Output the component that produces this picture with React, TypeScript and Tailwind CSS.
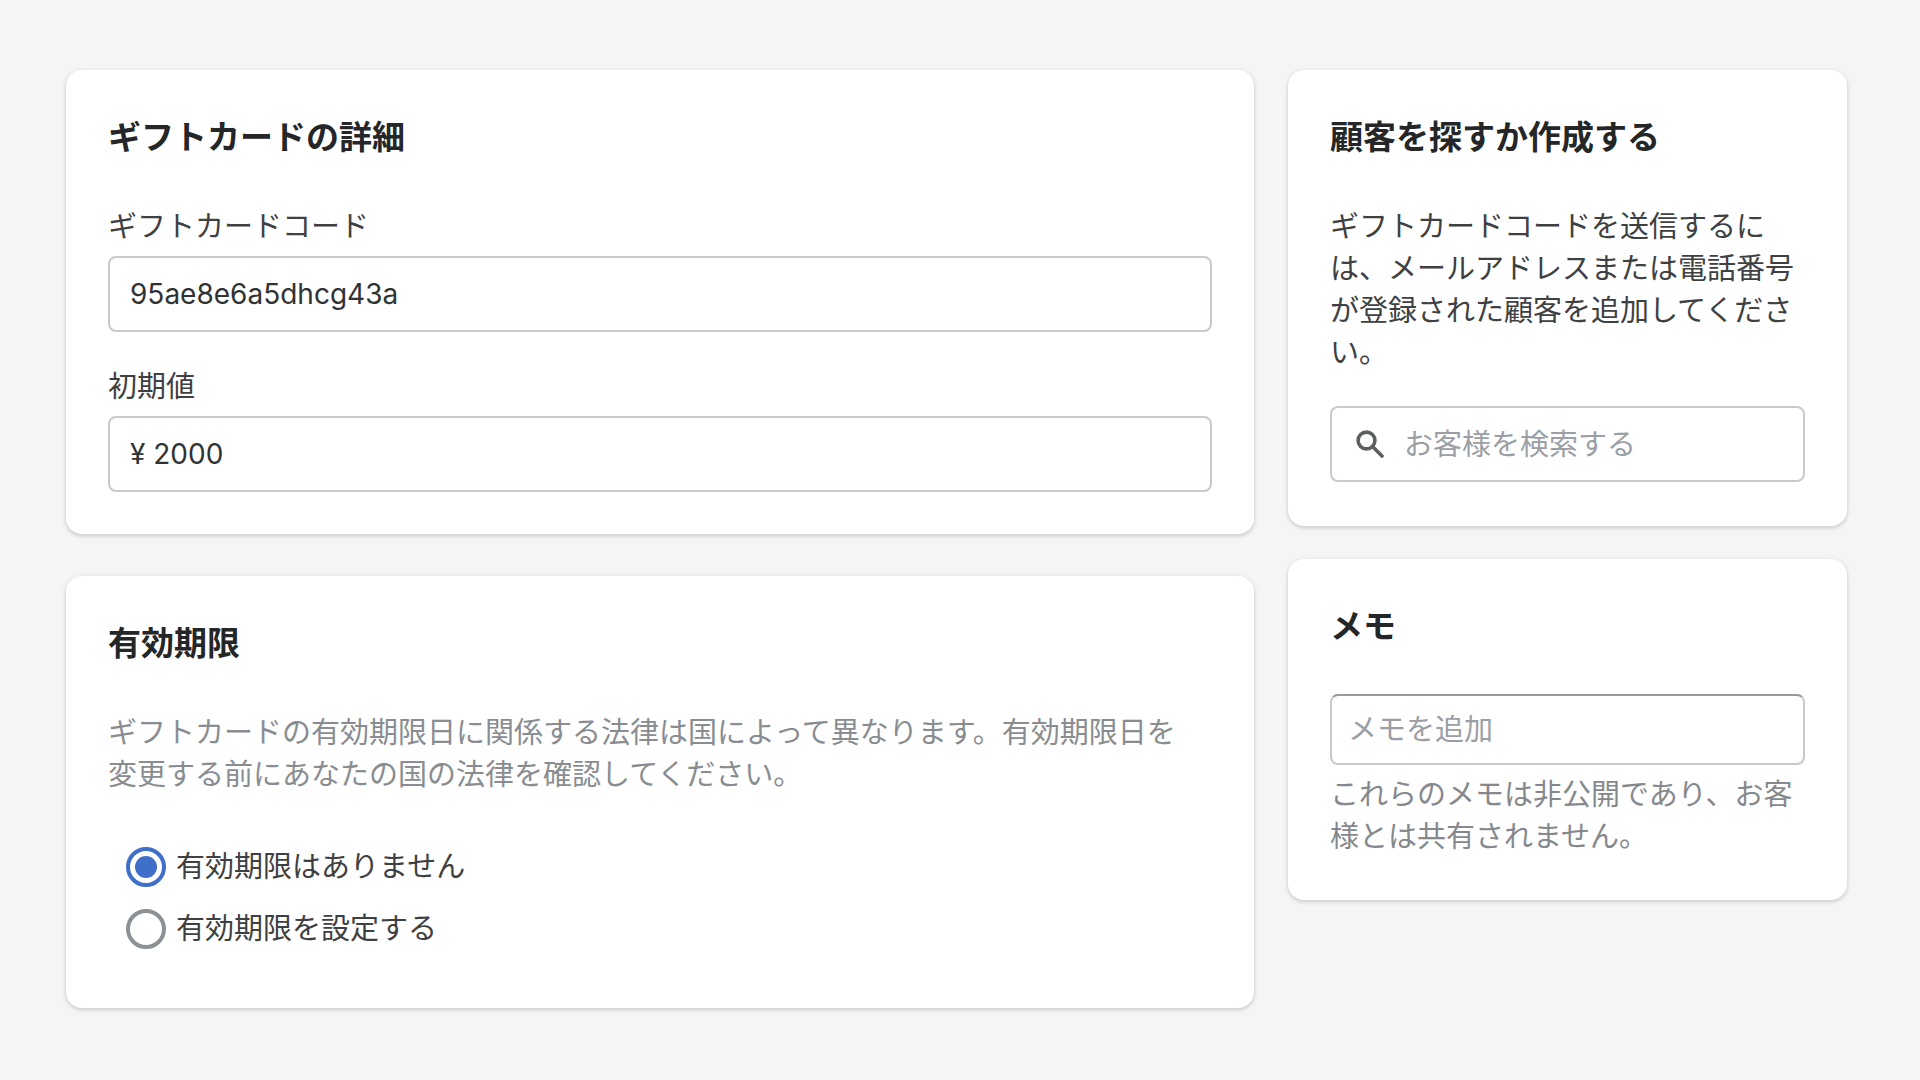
import { useState } from "react";
import type { ReactNode } from "react";

const FIELD =
  "w-full rounded-lg border-2 border-[#c6cace] bg-white text-[#303234] outline-none placeholder:text-[#9b9fa5] placeholder:opacity-100";

function Card({ title, className, children }: { title: string; className: string; children: ReactNode }) {
  return (
    <section
      className={`rounded-2xl bg-white px-[42px] pt-[42px] shadow-[0_0_6px_rgba(23,24,24,0.05),0_2px_4px_rgba(0,0,0,0.15)] ${className}`}
    >
      <h2 className="text-[33px] leading-[50px] font-bold text-[#242628]">{title}</h2>
      {children}
    </section>
  );
}

function Field({ id, label, value }: { id: string; label: string; value: string }) {
  return (
    <div className="flex flex-col gap-2">
      <label htmlFor={id}>{label}</label>
      <input id={id} type="text" defaultValue={value} className={`${FIELD} h-[76px] px-5 text-[28px]`} />
    </div>
  );
}

function Option({ label, checked, onChange }: { label: string; checked: boolean; onChange: () => void }) {
  return (
    <label className="flex items-center gap-[10px]">
      <input
        type="radio"
        name="expiry"
        checked={checked}
        onChange={onChange}
        className="grid size-10 shrink-0 appearance-none place-content-center rounded-full border-4 border-[#8c9196] bg-white before:size-[22px] before:rounded-full before:content-[''] checked:border-[#3f6fc8] checked:before:bg-[#3f6fc8]"
      />
      {label}
    </label>
  );
}

export default function App() {
  const [expires, setExpires] = useState(false);

  return (
    <main
      lang="ja"
      className="grid min-h-screen grid-cols-[17fr_8fr] items-start gap-[34px] bg-[#f5f5f8] pt-[70px] pr-[73px] pb-[72px] pl-[66px] font-[Inter,'Noto_Sans_CJK_JP',sans-serif] text-[29px] leading-[42px] text-[#3e4042]"
    >
      <div className="flex flex-col gap-[42px]">
        <Card title="ギフトカードの詳細" className="pb-[42px]">
          <div className="mt-[44px] flex flex-col gap-[34px]">
            <Field id="code" label="ギフトカードコード" value="95ae8e6a5dhcg43a" />
            <Field id="amount" label="初期値" value="¥ 2000" />
          </div>
        </Card>

        <Card title="有効期限" className="pb-[58px]">
          <p className="mt-[44px] mb-[50px] pr-4 text-[#898d91]">
            ギフトカードの有効期限日に関係する法律は国によって異なります。有効期限日を変更する前にあなたの国の法律を確認してください。
          </p>
          <div role="radiogroup" aria-label="有効期限" className="flex flex-col gap-5 pl-[18px]">
            <Option label="有効期限はありません" checked={!expires} onChange={() => setExpires(false)} />
            <Option label="有効期限を設定する" checked={expires} onChange={() => setExpires(true)} />
          </div>
        </Card>
      </div>

      <div className="flex flex-col gap-[33px]">
        <Card title="顧客を探すか作成する" className="pb-[44px]">
          <p className="mt-[44px] mb-8">
            ギフトカードコードを送信するには、メールアドレスまたは電話番号が登録された顧客を追加してください。
          </p>
          <div className="relative">
            <svg
              viewBox="0 0 28 28"
              fill="none"
              stroke="#5c5f62"
              strokeWidth="3.6"
              aria-hidden="true"
              className="absolute top-6 left-[26px] size-7"
            >
              <circle cx="10.5" cy="10.5" r="8.4" />
              <path d="M16.5 16.5 L26 26" strokeLinecap="round" />
            </svg>
            <input
              type="search"
              aria-label="お客様を検索する"
              placeholder="お客様を検索する"
              className={`${FIELD} h-[76px] pr-5 pl-[72px]`}
            />
          </div>
        </Card>

        <Card title="メモ" className="pb-[42px]">
          <input
            type="text"
            aria-label="メモ"
            aria-describedby="memo-help"
            placeholder="メモを追加"
            className={`${FIELD} mt-[43px] h-[71px] border-t-[#96999e] px-4`}
          />
          <p id="memo-help" className="mt-[9px] text-[#85898d]">
            これらのメモは非公開であり、お客様とは共有されません。
          </p>
        </Card>
      </div>
    </main>
  );
}
